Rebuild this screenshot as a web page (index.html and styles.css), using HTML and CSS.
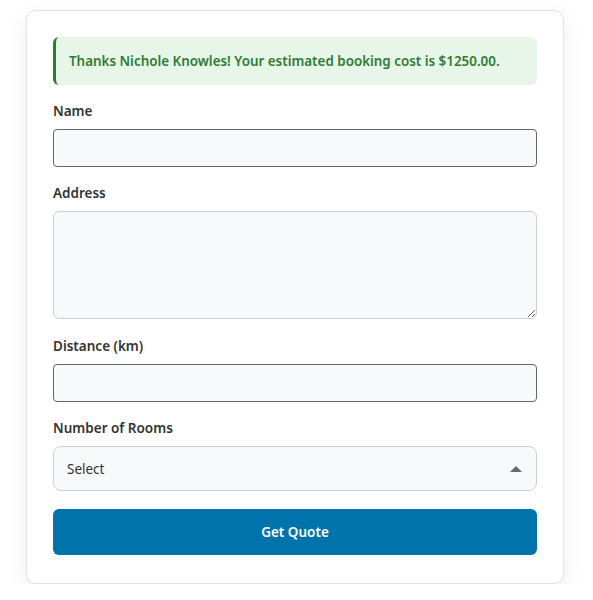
FILE: index.html
```html
<!DOCTYPE html>
<html lang="en">
<head>
<meta charset="utf-8">
<title>Booking Quote</title>
<link rel="stylesheet" href="styles.css">
</head>
<body>
<div class="card">
  <div class="alert">Thanks Nichole Knowles! Your estimated booking cost is $1250.00.</div>
  <form class="form">
    <div class="group">
      <label class="label" for="name">Name</label>
      <input class="input input-dark" id="name" type="text">
    </div>
    <div class="group">
      <label class="label" for="address">Address</label>
      <textarea class="input textarea" id="address"></textarea>
    </div>
    <div class="group">
      <label class="label" for="distance">Distance (km)</label>
      <input class="input input-dark" id="distance" type="text">
    </div>
    <div class="group">
      <label class="label" for="rooms">Number of Rooms</label>
      <div class="select">
        <span class="select-text">Select</span>
        <svg class="caret" width="12" height="7" viewBox="0 0 12 7"><path d="M0 7 L6 1 L12 7 Z" fill="#5f6b7a"/></svg>
      </div>
    </div>
    <button class="button" type="button">Get Quote</button>
  </form>
</div>
</body>
</html>
```
FILE: styles.css
```css
* { box-sizing: border-box; }
html, body { margin: 0; background: #ffffff; }
body {
  padding: 10px 0 0 26px;
  font-family: "Noto Sans", "Open Sans", sans-serif;
  color: #333;
}
.card {
  width: 538px;
  background: #fff;
  border: 1px solid #e2e2e2;
  border-radius: 10px;
  box-shadow: 0 6px 20px rgba(0,0,0,0.08);
  padding: 26px 26px 28px 26px;
}
.alert {
  background: #e8f5e9;
  border-left: 3px solid #2e7d32;
  border-radius: 6px;
  color: #2e7d32;
  font-weight: 600;
  font-size: 13.4px;
  line-height: 20px;
  padding: 14px 13px;
  margin-bottom: 17px;
}
.form { display: flex; flex-direction: column; }
.group { display: flex; flex-direction: column; margin-bottom: 17px; }
.label {
  font-size: 13.5px;
  font-weight: 600;
  line-height: 18px;
  color: #333;
  margin-bottom: 9px;
}
.input {
  display: block;
  width: 100%;
  height: 38px;
  background: #f8f9fa;
  border: 1px solid #ccd0d5;
  border-radius: 4px;
  font: inherit;
  margin: 0;
}
.input-dark { border-color: #666; }
.textarea { height: 108px; resize: vertical; border-radius: 6px; margin-bottom: 1px; }
.select {
  height: 45px;
  background: #f8f9fa;
  border: 1px solid #ccd0d5;
  border-radius: 8px;
  display: flex;
  align-items: center;
  justify-content: space-between;
  padding: 0 14px 0 13px;
}
.select-text { font-size: 13.5px; color: #333; }
.caret { display: block; }
.button {
  height: 46px;
  width: 100%;
  background: #0073aa;
  color: #fff;
  border: none;
  border-radius: 6px;
  font-family: inherit;
  font-weight: 600;
  font-size: 13.5px;
  margin-top: 1px;
}
```
